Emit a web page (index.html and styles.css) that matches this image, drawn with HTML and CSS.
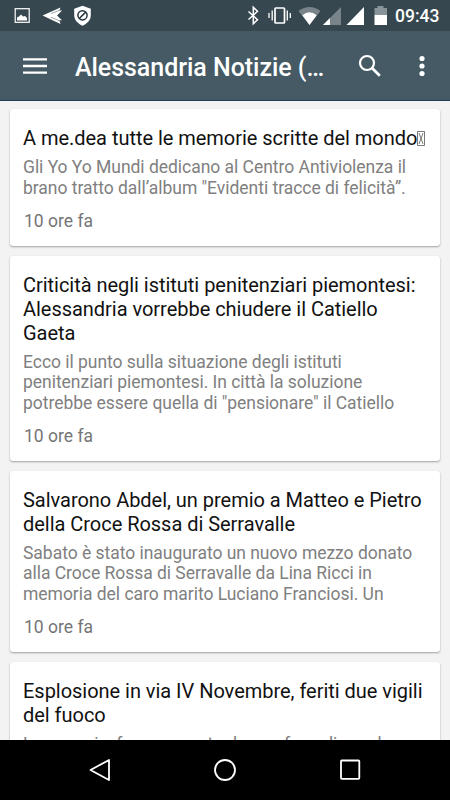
FILE: index.html
```html
<!DOCTYPE html>
<html lang="it">
<head>
    <meta charset="UTF-8">
    <meta name="viewport" content="width=device-width, initial-scale=1.0">
    <title>Alessandria Notizie</title>
    <link rel="stylesheet" href="styles.css">
</head>
<body>

<div class="statusbar">
    <svg class="status-left" width="100" height="31" viewBox="0 0 100 31">
        <!-- picture -->
        <rect x="15.2" y="8.7" width="14" height="13.6" fill="none" stroke="#fff" stroke-width="1.2"/>
        <path d="M17 20.5v-3l2-1 2-2 2 2 2-.5 2 2v2.5z" fill="#fff"/>
        <!-- plane -->
        <path d="M42.5 15.5L60.5 7.5 59.5 10.5 62 10.5 57 15.5 62 20.3 59.5 20.3 60.5 24z" fill="#fff"/>
        <path d="M51 13.6L60 10M51 17.2L60 21" stroke="#37474f" stroke-width=".5"/>
        <!-- shield -->
        <path d="M82.5 5.8l8.3 3v6.5c0 5-4 8.5-8.3 10.5-4.3-2-8.3-5.5-8.3-10.5V8.8z" fill="#fff"/>
        <circle cx="82.5" cy="15.3" r="4.6" fill="none" stroke="#26353d" stroke-width="1.5"/>
        <path d="M79.3 18.5l6.4-6.4" stroke="#26353d" stroke-width="1.5"/>
    </svg>
    <div class="status-right">
        <svg width="145" height="31" viewBox="245 0 145 31">
            <!-- bluetooth -->
            <path d="M248.5 11.5l9 8.2-4.2 4V7.3l4.2 4-9 8.2" fill="none" stroke="#fff" stroke-width="1.5"/>
            <!-- vibrate -->
            <rect x="275" y="8" width="9.5" height="15" rx=".8" fill="none" stroke="#fff" stroke-width="1.7"/>
            <path d="M272.2 10.5v10M287.3 10.5v10M269 13v5M290.3 13v5" stroke="#fff" stroke-width="1.3"/>
            <!-- wifi -->
            <path d="M298.5 11q11-8 22 0L309.5 25z" fill="#78848a"/>
            <path d="M302.3 15.3q7.2-6 14.4 0L309.5 25z" fill="#fff"/>
            <!-- signal -->
            <path d="M323 25L341 7v18z" fill="#78848a"/>
            <path d="M323 25L330 18v7z" fill="#fff"/>
            <path d="M346.5 25L364 7v18z" fill="#fff"/>
            <!-- battery -->
            <path d="M374.5 15V8h3V6h6v2h3.5v7z" fill="#87949a"/>
            <path d="M374.5 15H387v10h-12.5z" fill="#fff"/>
        </svg>
        <span class="clock">09:43</span>
    </div>
</div>

<header class="toolbar">
    <svg class="menu" width="24" height="18" viewBox="0 0 24 18">
        <path d="M0 2.3h24M0 9h24M0 15.7h24" stroke="#fff" stroke-width="2.3"/>
    </svg>
    <h1>Alessandria Notizie (…</h1>
    <svg class="search" width="24" height="24" viewBox="0 0 24 24">
        <circle cx="9" cy="9" r="7" fill="none" stroke="#fff" stroke-width="2.2"/>
        <path d="M14 14l7.8 7.8" stroke="#fff" stroke-width="2.8"/>
    </svg>
    <svg class="more" width="6" height="22" viewBox="0 0 6 22">
        <circle cx="3" cy="3.5" r="2.6" fill="#fff"/>
        <circle cx="3" cy="11" r="2.6" fill="#fff"/>
        <circle cx="3" cy="18.5" r="2.6" fill="#fff"/>
    </svg>
</header>

<main class="news">
    <article class="card">
        <h2>A me.dea tutte le memorie scritte del mondo<svg class="missing" width="8" height="15" viewBox="0 0 8 15"><path d="M.5.5h7v14h-7zM2 2l4 11M6 2L2 13" fill="none" stroke="#555" stroke-width=".8"/></svg></h2>
        <p>Gli Yo Yo Mundi dedicano al Centro Antiviolenza il<br>brano tratto dall’album "Evidenti tracce di felicità”.</p>
        <time>10 ore fa</time>
    </article>

    <article class="card">
        <h2>Criticità negli istituti penitenziari piemontesi:<br>Alessandria vorrebbe chiudere il Catiello<br>Gaeta</h2>
        <p>Ecco il punto sulla situazione degli istituti<br>penitenziari piemontesi. In città la soluzione<br>potrebbe essere quella di "pensionare" il Catiello</p>
        <time>10 ore fa</time>
    </article>

    <article class="card">
        <h2>Salvarono Abdel, un premio a Matteo e Pietro<br>della Croce Rossa di Serravalle</h2>
        <p>Sabato è stato inaugurato un nuovo mezzo donato<br>alla Croce Rossa di Serravalle da Lina Ricci in<br>memoria del caro marito Luciano Franciosi. Un</p>
        <time>10 ore fa</time>
    </article>

    <article class="card">
        <h2>Esplosione in via IV Novembre, feriti due vigili<br>del fuoco</h2>
        <p>Lo scoppio, forse causato da una fuga di gas, ha</p>
    </article>
</main>

<nav class="navbar">
    <svg width="22" height="24" viewBox="0 0 22 24">
        <path d="M1.5 12L20 2v20z" fill="none" stroke="#fff" stroke-width="1.8" stroke-linejoin="round"/>
    </svg>
    <svg width="24" height="24" viewBox="0 0 24 24">
        <circle cx="12" cy="12" r="10" fill="none" stroke="#fff" stroke-width="1.8"/>
    </svg>
    <svg width="22" height="24" viewBox="0 0 22 24">
        <rect x="2" y="2.5" width="18.3" height="18.3" rx=".8" fill="none" stroke="#fff" stroke-width="1.8"/>
    </svg>
</nav>

</body>
</html>
```
FILE: styles.css
```css
* {
    box-sizing: border-box;
}
body {
    font-family: Roboto, sans-serif;
    margin: 0;
    height: 800px;
    display: flex;
    flex-direction: column;
    background: #f3f3f3;
    overflow: hidden;
}
svg {
    display: block;
    flex: none;
}
.statusbar {
    flex: none;
    height: 31px;
    display: flex;
    justify-content: space-between;
    background: #37474f;
    color: white;
}
.status-right {
    display: flex;
    width: 205px;
}
.clock {
    margin-left: 5px;
    font-size: 17.5px;
    font-weight: 500;
    line-height: 32px;
}
.toolbar {
    flex: none;
    height: 70px;
    padding: 1px 25px 0 23px;
    display: flex;
    align-items: center;
    background: #455a64;
    border-bottom: 1px solid #174055;
    color: white;
}
.toolbar h1 {
    margin: 0 0 0 28px;
    padding-top: 3px;
    width: 283px;
    font-size: 25px;
    font-weight: 500;
    line-height: 30px;
    letter-spacing: -0.04px;
    white-space: nowrap;
}
.more {
    margin-left: auto;
}
.news {
    flex: 1;
    min-height: 0;
    overflow: hidden;
    padding: 8px 10px 0;
}
.card {
    margin-bottom: 10px;
    padding: 17px 13px 14px;
    background: white;
    border-radius: 3px;
    box-shadow: 0 1px 2px rgba(0, 0, 0, 0.35);
}
.card h2 {
    margin: 0 0 7px;
    color: #111;
    font-size: 20px;
    font-weight: 400;
    line-height: 24px;
    letter-spacing: -0.03px;
    white-space: nowrap;
}
.card p {
    margin: 0 0 12.7px;
    color: #808080;
    font-size: 17.5px;
    line-height: 20.5px;
    letter-spacing: -0.03px;
    white-space: nowrap;
}
.card time {
    display: block;
    padding-left: 1px;
    color: #757575;
    font-size: 17.5px;
    line-height: 21px;
}
.missing {
    display: inline-block;
    vertical-align: -1px;
}
.navbar {
    flex: none;
    height: 60px;
    display: flex;
    justify-content: space-between;
    align-items: center;
    padding: 0 89px;
    background: black;
}
```
